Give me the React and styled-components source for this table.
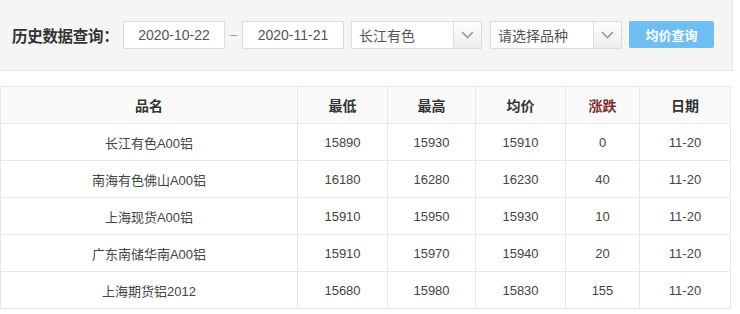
import React from "react";
import styled, { createGlobalStyle } from "styled-components";

const Global = createGlobalStyle`
  html, body { margin: 0; padding: 0; background: #fff; }
  body { font-family: "Liberation Sans", "Noto Sans CJK SC", sans-serif; color: #333; }
`;

const Page = styled.div`
  width: 740px;
`;

const Toolbar = styled.div`
  box-sizing: border-box;
  width: 733px;
  height: 71px;
  background: #f5f5f5;
  border-right: 1px solid #e3e3e3;
  border-bottom: 1px solid #e3e3e3;
  display: flex;
  align-items: center;
  padding: 0 0 1px 12px;
`;

const Label = styled.span`
  font-family: "Noto Sans CJK SC", sans-serif;
  font-size: 15.5px;
  font-weight: 700;
  color: #333;
  width: 111px;
  white-space: nowrap;
  letter-spacing: -0.3px;
`;

const DateBox = styled.div`
  box-sizing: border-box;
  width: 102px;
  height: 28px;
  background: #fff;
  border: 1px solid #dcdcdc;
  font-size: 14px;
  color: #555;
  display: flex;
  align-items: center;
  justify-content: center;
`;

const Dash = styled.span`
  width: 17px;
  text-align: center;
  color: #999;
  font-size: 13px;
`;

const Select = styled.div`
  box-sizing: border-box;
  width: ${(p) => p.$w}px;
  height: 28px;
  margin-left: ${(p) => p.$ml}px;
  background: #fff;
  border: 1px solid #dcdcdc;
  display: flex;
  align-items: stretch;
`;

const SelectText = styled.span`
  flex: 1;
  font-family: "Noto Sans CJK SC", sans-serif;
  font-size: 14px;
  color: #555;
  display: flex;
  align-items: center;
  padding-left: 7px;
`;

const Arrow = styled.span`
  width: 27px;
  border-left: 1px solid #dedede;
  background: linear-gradient(#ffffff, #ececec);
  display: flex;
  align-items: center;
  justify-content: center;
`;

const Button = styled.button`
  box-sizing: border-box;
  width: 85px;
  height: 27px;
  margin-left: 7px;
  border: none;
  border-radius: 2px;
  background: #6ebef2;
  color: #fff;
  font-family: "Noto Sans CJK SC", sans-serif;
  font-size: 13px;
  font-weight: 700;
  padding: 0;
`;

const Table = styled.table`
  margin-top: 15px;
  width: 730px;
  border-collapse: collapse;
  table-layout: fixed;
`;

const Th = styled.th`
  height: 36px;
  padding: 0;
  background: #fafafa;
  border: 1px solid #e8e8e8;
  font-family: "Noto Sans CJK SC", sans-serif;
  font-size: 14px;
  font-weight: 700;
  color: ${(p) => (p.$red ? "#7a2e2e" : "#333")};
  text-align: center;
`;

const Td = styled.td`
  height: 36px;
  padding: 0;
  border: 1px solid #e8e8e8;
  font-family: "Liberation Sans", "Noto Sans CJK SC", sans-serif;
  font-size: 13px;
  color: #444;
  text-align: center;
`;

const Chevron = () => (
  <svg width="13" height="8" viewBox="0 0 13 8">
    <path d="M1 1 L6.5 6.5 L12 1" fill="none" stroke="#9a9a9a" strokeWidth="1.6" />
  </svg>
);

const rows = [
  ["长江有色A00铝", "15890", "15930", "15910", "0", "11-20"],
  ["南海有色佛山A00铝", "16180", "16280", "16230", "40", "11-20"],
  ["上海现货A00铝", "15910", "15950", "15930", "10", "11-20"],
  ["广东南储华南A00铝", "15910", "15970", "15940", "20", "11-20"],
  ["上海期货铝2012", "15680", "15980", "15830", "155", "11-20"],
];

const widths = [297, 90, 88, 90, 74, 91];

export default function App() {
  return (
    <Page>
      <Global />
      <Toolbar>
        <Label>历史数据查询：</Label>
        <DateBox>2020-10-22</DateBox>
        <Dash>–</Dash>
        <DateBox>2020-11-21</DateBox>
        <Select $w={131} $ml={7}>
          <SelectText>长江有色</SelectText>
          <Arrow><Chevron /></Arrow>
        </Select>
        <Select $w={132} $ml={8}>
          <SelectText>请选择品种</SelectText>
          <Arrow><Chevron /></Arrow>
        </Select>
        <Button>均价查询</Button>
      </Toolbar>
      <Table>
        <colgroup>
          {widths.map((w, i) => (
            <col key={i} style={{ width: w }} />
          ))}
        </colgroup>
        <thead>
          <tr>
            <Th>品名</Th>
            <Th>最低</Th>
            <Th>最高</Th>
            <Th>均价</Th>
            <Th $red>涨跌</Th>
            <Th>日期</Th>
          </tr>
        </thead>
        <tbody>
          {rows.map((r, i) => (
            <tr key={i}>
              {r.map((c, j) => (
                <Td key={j}>{c}</Td>
              ))}
            </tr>
          ))}
        </tbody>
      </Table>
    </Page>
  );
}
